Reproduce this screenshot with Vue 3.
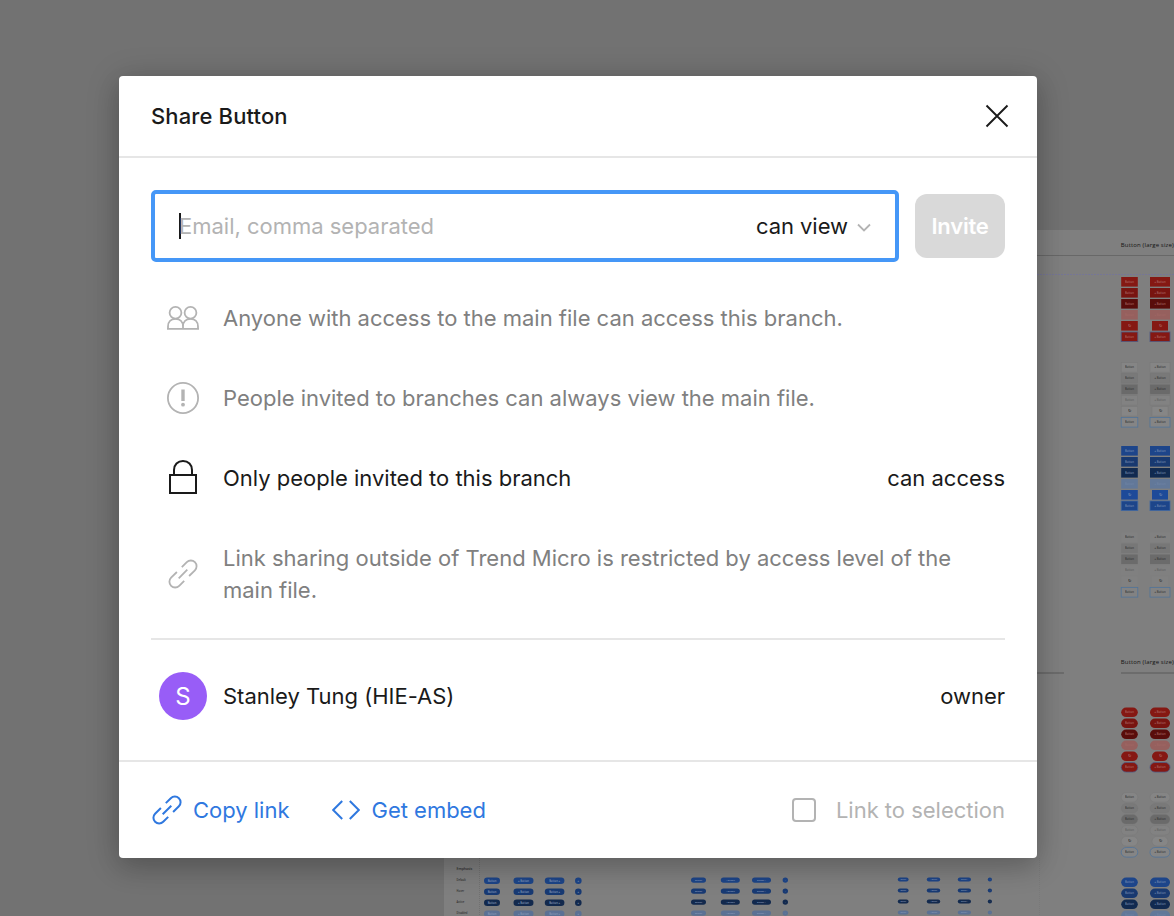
<script setup>
import { ref } from 'vue'

const email = ref('')

const red = ['#851813', '#781410', '#590d0b', '#96605e', '#851813', '#851813']
const gray = ['#858585', '#797979', '#6a6a6a', '#828282', '#868686', '#858585']
const blue = ['#1d458a', '#183970', '#112a50', '#627899', '#1d4a99', '#1d458a']
const white = ['#818181', '#777777', '#6b6b6b', '#808080', '#818181', '#828282']

const sets = [
  { y: 277, colors: red, text: '#b07370', r: 0, stroke: '#505a83' },
  { y: 362.5, colors: gray, text: '#303030', r: 0, stroke: '#51749a' },
  { y: 446, colors: blue, text: '#8095b7', r: 0, stroke: '#4268a0' },
  { y: 532.5, colors: white, text: '#303030', r: 0, stroke: '#51749a' },
  { y: 707.5, colors: red, text: '#b07370', r: 5, stroke: '#505a83' },
  { y: 792.5, colors: gray, text: '#303030', r: 5, stroke: '#51749a' },
  { y: 877.5, colors: blue.slice(0, 4), text: '#8095b7', r: 5, stroke: '#4268a0' },
]

const variants = []
sets.forEach((set) => {
  set.colors.forEach((fill, i) => {
    ;[{ x: 1121.2, w: 16.6 }, { x: 1150, w: 20 }].forEach((col, c) => {
      const loading = i === 4
      const inset = loading && c === 1 ? 2 : 0
      const isGray = set.colors === gray
      variants.push({
        x: col.x + inset,
        y: set.y + i * 11,
        w: col.w - inset * 2,
        h: 9.6,
        r: set.r,
        fill,
        stroke: i === 5 ? set.stroke : isGray ? '#767676' : 'none',
        line: i === 5 ? 0.8 : 0.4,
        color: set.text,
        opacity: i === 3 ? 0.4 : 0.85,
        size: loading ? 4 : 2.7,
        label: loading ? '↻' : c ? '+ Button' : 'Button',
      })
    })
  })
})

const groups = [
  { h: 6.6, items: [[484, 16], [513.5, 20], [544.8, 19.6], [575, 6.6]] },
  { h: 5.4, items: [[691, 15], [720.8, 19], [752, 19], [782.6, 5.4]] },
  { h: 4.2, items: [[897.8, 10.8], [926.8, 13.4], [957.8, 13.2], [987.8, 4.2]] },
]
const shades = ['#1d4588', '#183a73', '#12294d', '#5b7194']
const labels = ['Button', '+ Button', 'Button +', '+']
const pills = []
groups.forEach((g) =>
  shades.forEach((fill, row) =>
    g.items.forEach(([x, w], i) =>
      pills.push({ x, y: 877.4 + row * 11, w, h: g.h, fill, label: labels[i], size: g.h * 0.4 })
    )
  )
)
const states = ['Default', 'Hover', 'Active', 'Disabled']
</script>

<template>
  <main class="screen">
    <svg class="canvas" width="1174" height="916" viewBox="0 0 1174 916" aria-hidden="true">
      <rect x="444" y="230" width="730" height="686" fill="#7f7f7f" />
      <path d="M1037 255.5H1174" stroke="#686868" />
      <path d="M1037 274.5H1174" stroke="#7272a0" stroke-width=".7" stroke-dasharray="2 1" />
      <path d="M1037 673H1064M1121 673H1174" stroke="#6c6c6c" stroke-width="1.8" />
      <path d="M479.5 858V916" stroke="#6c6c6c" stroke-width=".7" stroke-dasharray="1 1" />
      <path d="M1039.5 858V916" stroke="#757575" stroke-width=".5" stroke-dasharray="1 1" />
      <g class="board-title">
        <text x="1120.8" y="247" textLength="53">Button (large size)</text>
        <text x="1120.8" y="664" textLength="53">Button (large size)</text>
      </g>
      <text class="caption" x="456.6" y="869.7" textLength="15.6">Emphasis</text>
      <text v-for="(s, i) in states" :key="s" class="state" x="456.6" :y="881.3 + i * 11">{{ s }}</text>
      <g v-for="(b, i) in variants" :key="'v' + i">
        <rect :x="b.x" :y="b.y" :width="b.w" :height="b.h" :rx="b.r" :fill="b.fill" :stroke="b.stroke" :stroke-width="b.line" />
        <text class="mini" :x="b.x + b.w / 2" :y="b.y + 5.9" :fill="b.color" :opacity="b.opacity" :font-size="b.size">{{ b.label }}</text>
      </g>
      <g v-for="(p, i) in pills" :key="'p' + i">
        <rect :x="p.x" :y="p.y" :width="p.w" :height="p.h" :rx="p.h / 2" :fill="p.fill" />
        <text class="mini" :x="p.x + p.w / 2" :y="p.y + p.h * 0.65" fill="#8799b8" :font-size="p.size">{{ p.label }}</text>
      </g>
    </svg>

    <section class="dialog" role="dialog" aria-label="Share Button">
      <header class="header">
        <h1 class="title">Share Button</h1>
        <button class="close" aria-label="Close">
          <svg width="24" height="24" viewBox="0 0 24 24"><path d="M1.5 1.5 22.5 22.5M22.5 1.5 1.5 22.5" /></svg>
        </button>
      </header>

      <div class="body">
        <div class="invite-row">
          <div class="field">
            <span class="caret"></span>
            <input v-model="email" class="email" placeholder="Email, comma separated" />
            <span class="permission">can view</span>
            <svg class="chevron" width="14" height="10" viewBox="0 0 14 10"><path d="m1 1.5 6 6 6-6" /></svg>
          </div>
          <button class="invite">Invite</button>
        </div>

        <ul class="rows">
          <li class="row">
            <span class="icon">
              <svg width="32" height="24" viewBox="0 0 32 24">
                <circle cx="8.5" cy="6.8" r="5.9" /><circle cx="23.5" cy="6.8" r="5.9" />
                <path d="M1 22.8V20.5C1 16 4 12.8 8.5 12.8S16 16 16 20.5V22.8M16 20.5C16 16 19 12.8 23.5 12.8S31 16 31 20.5V22.8M0 22.8H32" />
              </svg>
            </span>
            <span class="text">Anyone with access to the main file can access this branch.</span>
          </li>
          <li class="row">
            <span class="icon">
              <svg width="32" height="32" viewBox="0 0 32 32">
                <circle cx="16" cy="16" r="15.1" />
                <path d="M16 7.5V19" stroke-width="3.4" /><circle class="dot" cx="16" cy="22.7" r="1.9" />
              </svg>
            </span>
            <span class="text">People invited to branches can always view the main file.</span>
          </li>
          <li class="row strong">
            <span class="icon lock">
              <svg width="28" height="34" viewBox="0 0 28 34">
                <path d="M1 15H27V33H1ZM5 15V10C5 4.7 8.7 1 14 1S23 4.7 23 10V15" />
              </svg>
            </span>
            <span class="text">Only people invited to this branch</span>
            <span class="role">can access</span>
          </li>
          <li class="row tall">
            <span class="icon">
              <svg width="32" height="32" viewBox="0 0 32 32">
                <path d="m14.8 9.1 5-4.9a5.7 5.7 0 0 1 8.1 8.1l-5.8 5.7M17.2 22.9l-5 4.9a5.7 5.7 0 0 1-8.1-8.1l5.8-5.7M11.7 20.3l8.6-8.6" />
              </svg>
            </span>
            <span class="text">Link sharing outside of Trend Micro is restricted by access level of the main file.</span>
          </li>
        </ul>

        <div class="member">
          <span class="avatar">S</span>
          <span class="text">Stanley Tung (HIE-AS)</span>
          <span class="role">owner</span>
        </div>
      </div>

      <footer class="footer">
        <a class="action">
          <svg width="32" height="32" viewBox="0 0 32 32">
            <path d="m14.8 9.1 5-4.9a5.7 5.7 0 0 1 8.1 8.1l-5.8 5.7M17.2 22.9l-5 4.9a5.7 5.7 0 0 1-8.1-8.1l5.8-5.7M11.7 20.3l8.6-8.6" />
          </svg>
          <span>Copy link</span>
        </a>
        <a class="action embed">
          <svg width="28" height="20" viewBox="0 0 28 20"><path d="M10.2 1 1.2 10l9 9M17.8 1l9 9-9 9" /></svg>
          <span>Get embed</span>
        </a>
        <label class="selection"><span class="checkbox"></span>Link to selection</label>
      </footer>
    </section>
  </main>
</template>

<style>
html, body { margin: 0; overflow: hidden; }
</style>

<style scoped>
.screen {
  position: relative;
  width: 1174px;
  height: 916px;
  box-sizing: border-box;
  padding: 76px 0 0 119px;
  overflow: hidden;
  background: #727272;
  font-family: Inter, sans-serif;
  font-size: 22px;
  letter-spacing: -0.01px;
  line-height: 32px;
  color: #1a1a1a;
}
.canvas { position: absolute; inset: 0; letter-spacing: 0; }
.board-title { font: 6px "Open Sans", sans-serif; fill: #141414; }
.caption { font: 600 3.6px "Open Sans", sans-serif; fill: #303030; }
.state { font: 600 2.6px "Open Sans", sans-serif; fill: #303030; }
.mini { font-family: "Open Sans", sans-serif; font-weight: 600; text-anchor: middle; }
.dialog {
  position: relative;
  width: 918px;
  height: 782px;
  display: flex;
  flex-direction: column;
  background: #fff;
  border-radius: 4px;
  box-shadow: 0 4px 34px rgba(0, 0, 0, 0.2), 0 10px 24px rgba(0, 0, 0, 0.12);
}
button { font: inherit; letter-spacing: inherit; border: 0; padding: 0; }
svg path, svg circle { fill: none; }
.canvas path { fill: none; }
.header {
  height: 80px;
  flex: none;
  display: flex;
  align-items: center;
  justify-content: space-between;
  padding: 0 28px 0 32px;
  border-bottom: 2px solid #e6e6e6;
}
.title { margin: 0; font-size: 22px; font-weight: 500; letter-spacing: 0.13px; }
.close { display: flex; background: none; }
.close path { stroke: #1a1a1a; stroke-width: 1.9; }
.body { flex: 1; padding: 32px 32px 0; }
.invite-row { display: flex; align-items: center; gap: 16px; height: 72px; }
.field {
  width: 748px;
  height: 72px;
  box-sizing: border-box;
  display: flex;
  align-items: center;
  border: 4px solid #4597f7;
  border-radius: 5px;
  padding: 0 24px;
}
.caret { width: 2px; height: 26px; margin-right: -2px; background: #1a1a1a; }
.email {
  flex: 1;
  min-width: 0;
  padding: 0;
  border: 0;
  outline: 0;
  background: none;
  font: inherit;
  letter-spacing: inherit;
  color: inherit;
}
.email::placeholder { color: #b3b3b3; opacity: 1; }
.permission { letter-spacing: -0.05px; }
.chevron { margin: 3px 0 0 9px; }
.chevron path { stroke: #b3b3b3; stroke-width: 1.8; }
.invite {
  width: 90px;
  height: 64px;
  border-radius: 12px;
  background: #d9d9d9;
  color: #fff;
  font-weight: 600;
  letter-spacing: -0.25px;
}
.rows { list-style: none; margin: 0; padding: 16px 0 8px; }
.row { display: flex; align-items: center; height: 80px; color: #808080; }
.row.tall { height: 112px; }
.row.strong { color: #1a1a1a; }
.icon { width: 32px; margin: 0 24px 0 16px; display: flex; justify-content: center; }
.icon path, .icon circle { stroke: #b3b3b3; stroke-width: 1.8; }
.icon path[stroke-width] { stroke-width: 3.4; }
.icon .dot { fill: #b3b3b3; stroke: none; }
.icon.lock { padding-bottom: 2px; }
.strong .icon path { stroke: #1a1a1a; stroke-width: 2; }
.text { flex: 1; }
.member {
  display: flex;
  align-items: center;
  height: 112px;
  border-top: 2px solid #e6e6e6;
}
.avatar {
  width: 48px;
  height: 48px;
  margin: 0 16px 0 8px;
  border-radius: 50%;
  background: #985df7;
  color: #fff;
  font-size: 24px;
  line-height: 49px;
  text-align: center;
}
.footer {
  height: 96px;
  flex: none;
  display: flex;
  align-items: center;
  padding: 0 32px;
  border-top: 2px solid #e6e6e6;
}
.action { display: flex; align-items: center; gap: 10px; color: #2f78df; }
.action path { stroke: #2f78df; stroke-width: 2; }
.embed { gap: 12px; margin-left: 42px; }
.selection { display: flex; align-items: center; gap: 20px; margin-left: auto; color: #b3b3b3; }
.checkbox { width: 20px; height: 20px; border: 2px solid #b3b3b3; border-radius: 4px; }
</style>
